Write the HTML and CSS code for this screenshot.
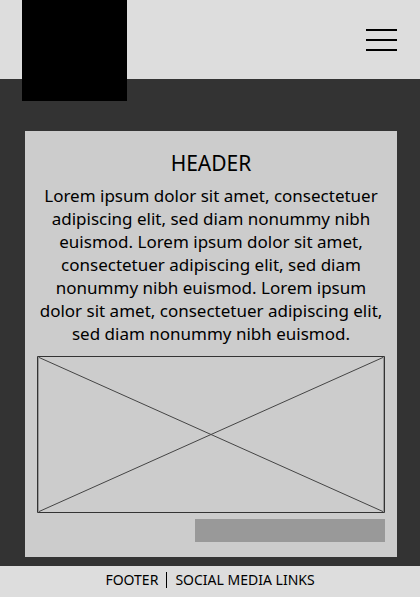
FILE: index.html
```html
<!DOCTYPE html>
<html lang="en">
<head>
<meta charset="utf-8">
<meta name="viewport" content="width=device-width, initial-scale=1">
<title>Header</title>
<link rel="stylesheet" href="styles.css">
</head>
<body>
<header class="topbar">
  <div class="logo"></div>
  <button class="menu" type="button" aria-label="Menu">
    <svg width="31" height="24" viewBox="0 0 31 24" shape-rendering="crispEdges"><path d="M0 2h31M0 12h31M0 22h31" stroke="#000" stroke-width="2"/></svg>
  </button>
</header>
<main class="content">
  <article class="card">
    <h1 class="title">HEADER</h1>
    <p class="copy">Lorem ipsum dolor sit amet, consectetuer adipiscing elit, sed diam nonummy nibh euismod. Lorem ipsum dolor sit amet, consectetuer adipiscing elit, sed diam nonummy nibh euismod. Lorem ipsum dolor sit amet, consectetuer adipiscing elit, sed diam nonummy nibh euismod.</p>
    <svg class="image" viewBox="0 0 348 157" preserveAspectRatio="none" fill="none" stroke="#333">
      <path d="M.5 .5h347v156H.5z"/>
      <path d="M1 1L347 156M347 1L1 156" stroke="#444"/>
      <path d="M1.500 1v155M346.500 1v155" stroke="#999"/>
    </svg>
    <button class="action" type="button" aria-label="Continue"></button>
  </article>
</main>
<footer class="footer"><span>FOOTER</span><span class="divider"></span><a href="#">SOCIAL MEDIA LINKS</a></footer>
</body>
</html>
```
FILE: styles.css
```css
* { box-sizing: border-box; }
body {
  margin: 0;
  min-height: 100vh;
  display: flex;
  flex-direction: column;
  background: #333;
  color: #000;
  font-family: "Noto Sans", "Open Sans", sans-serif;
}
.topbar {
  height: 79px;
  padding: 0 23px 0 22px;
  display: flex;
  justify-content: space-between;
  align-items: flex-start;
  background: #ddd;
}
.logo { width: 105px; height: 101px; background: #000; }
.menu { margin: 28px 0 0; padding: 0; border: 0; background: none; }
.menu svg { display: block; }
.content { flex: 1; padding: 52px 23px 9px 25px; }
.card { padding: 20px 12px 15px; background: #ccc; }
.title { margin: 0 0 8px; font-size: 21px; line-height: 25px; font-weight: 400; text-align: center; }
.copy { margin: 0; font-size: 17px; line-height: 23px; text-align: center; }
.image { display: block; width: 100%; height: 157px; margin-top: 11px; }
.action { display: block; width: 190px; height: 23px; margin: 6px 0 0 auto; padding: 0; border: 0; background: #999; }
.footer {
  height: 31px;
  padding-bottom: 3px;
  display: flex;
  justify-content: center;
  align-items: center;
  gap: 8px;
  background: #ddd;
  font-size: 14px;
  line-height: 20px;
}
.footer a { color: inherit; text-decoration: none; }
.divider { width: 1px; height: 16px; background: #000; }
```
